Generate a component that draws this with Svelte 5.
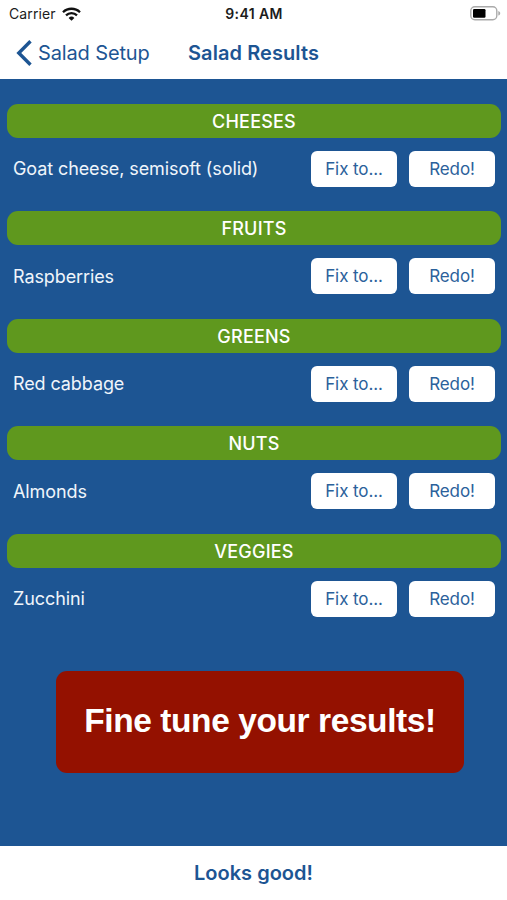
<style>
    :global(body) {
        margin: 0;
        background-color: white;
    }

    .screen {
        display: flex;
        flex-direction: column;
        width: 507px;
        height: 900px;
        overflow: hidden;
        background-color: #1d5593;
        font-family: Inter, "Liberation Sans", sans-serif;
    }

    header {
        height: 79px;
        background-color: white;
        color: #1d5593;
    }

    .status {
        display: grid;
        grid-template-columns: 1fr auto 1fr;
        align-items: center;
        height: 27px;
        padding: 0 6px 0 9px;
        box-sizing: border-box;
        color: #1c1c1c;
        font-size: 14px;
    }

    .carrier {
        display: flex;
        align-items: center;
        gap: 6px;
        letter-spacing: 0.1px;
    }

    .time {
        font-weight: 600;
        font-size: 14px;
        letter-spacing: 0.4px;
        padding-right: 2px;
    }

    .battery {
        justify-self: end;
    }

    svg {
        display: block;
    }

    nav {
        display: grid;
        grid-template-columns: 1fr auto 1fr;
        align-items: center;
        height: 51px;
        padding: 0 16px;
    }

    .back {
        display: flex;
        align-items: center;
        gap: 5px;
        padding: 0;
        border: none;
        background: none;
        color: inherit;
        font-family: inherit;
        font-size: 20px;
        letter-spacing: -0.13px;
    }

    h1 {
        margin: 0;
        font-size: 20px;
        font-weight: 600;
        letter-spacing: 0.08px;
    }

    main {
        flex: 1;
        padding: 24.5px 6px 0 7px;
    }

    section {
        height: 107.5px;
    }

    h2 {
        height: 34px;
        margin: 0 0 13px;
        border-radius: 11px;
        background-color: #5f981e;
        color: white;
        font-size: 18px;
        font-weight: 500;
        letter-spacing: 0.2px;
        line-height: 35px;
        text-align: center;
    }

    .row {
        display: flex;
        align-items: center;
        gap: 12px;
        padding: 0 6px;
    }

    .row p {
        flex: 1;
        margin: 0;
        color: #f0f5fb;
        font-size: 18px;
        letter-spacing: -0.1px;
    }

    .row button {
        width: 86px;
        height: 36px;
        padding: 0;
        border: none;
        border-radius: 6px;
        background-color: white;
        color: #2b619b;
        font-family: inherit;
        font-size: 17px;
        letter-spacing: -0.1px;
    }

    .banner {
        width: 408px;
        height: 102px;
        margin: 29.5px 0 0 49px;
        border-radius: 11px;
        background-color: #941100;
        color: white;
        font-family: "Liberation Sans", Arial, sans-serif;
        font-size: 33.5px;
        font-weight: bold;
        letter-spacing: -0.42px;
        line-height: 100px;
        text-align: center;
        white-space: nowrap;
    }

    footer {
        display: flex;
        height: 54px;
        background-color: white;
    }

    footer button {
        flex: 1;
        padding: 0;
        border: none;
        background: none;
        color: #1d5593;
        font-family: inherit;
        font-size: 20px;
        font-weight: 600;
    }
</style>

<script lang="ts">
    const results = [
        {category: "CHEESES", item: "Goat cheese, semisoft (solid)"},
        {category: "FRUITS", item: "Raspberries"},
        {category: "GREENS", item: "Red cabbage"},
        {category: "NUTS", item: "Almonds"},
        {category: "VEGGIES", item: "Zucchini"},
    ];
</script>

<div class="screen">
    <header>
        <div class="status">
            <div class="carrier">
                <span>Carrier</span>
                <svg width="19" height="14" viewBox="0 0 19 14" fill="none" stroke="#111" stroke-width="2.3">
                    <path d="M1 5.2a12.2 12.2 0 0 1 17 0"/>
                    <path d="M4 8.4a7.9 7.9 0 0 1 11 0"/>
                    <path d="M9.5 13.8L6.6 11a4.1 4.1 0 0 1 5.8 0z" fill="#111" stroke="none"/>
                </svg>
            </div>
            <span class="time">9:41 AM</span>
            <svg class="battery" width="31" height="15" viewBox="0 0 31 15">
                <rect x="0.8" y="0.8" width="26" height="13" rx="4" fill="white" stroke="#aaa" stroke-width="1.4"/>
                <rect x="3" y="3" width="12.5" height="8.8" rx="1.2" fill="#000"/>
                <path d="M28.3 5v4.6c2.6-.8 2.6-3.8 0-4.6z" fill="#aaa"/>
            </svg>
        </div>
        <nav>
            <button class="back">
                <svg width="17" height="26" viewBox="0 0 17 26" fill="none" stroke="currentColor" stroke-width="3.4">
                    <path d="M14.5 1.3L2.8 13l11.7 11.7"/>
                </svg>
                <span>Salad Setup</span>
            </button>
            <h1>Salad Results</h1>
        </nav>
    </header>
    <main>
        {#each results as result}
            <section>
                <h2>{result.category}</h2>
                <div class="row">
                    <p>{result.item}</p>
                    <button>Fix to...</button>
                    <button>Redo!</button>
                </div>
            </section>
        {/each}
        <div class="banner">Fine tune your results!</div>
    </main>
    <footer>
        <button>Looks good!</button>
    </footer>
</div>
